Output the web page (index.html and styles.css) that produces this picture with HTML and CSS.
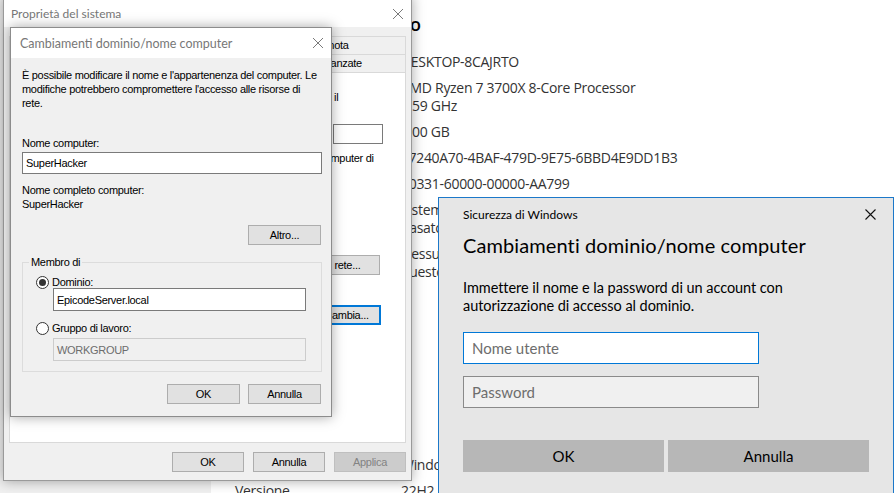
FILE: index.html
```html
<!DOCTYPE html>
<html lang="it">
<head>
<meta charset="utf-8">
<title>Cambiamenti dominio/nome computer</title>
<link rel="stylesheet" href="styles.css">
</head>
<body>
<div class="settings">
  <nav class="nav"></nav>
  <main class="main">
    <h2 class="sec-title">Specifiche dispositivo</h2>
    <dl class="specs">
      <div class="row"><dt>Nome dispositivo</dt><dd>DESKTOP-8CAJRTO</dd></div>
      <div class="row"><dt>Processore</dt><dd>AMD Ryzen 7 3700X 8-Core Processor<br>3.59 GHz</dd></div>
      <div class="row"><dt>RAM installata</dt><dd>8,00 GB</dd></div>
      <div class="row"><dt>ID dispositivo</dt><dd>E7240A70-4BAF-479D-9E75-6BBD4E9DD1B3</dd></div>
      <div class="row"><dt>ID prodotto</dt><dd>00331-60000-00000-AA799</dd></div>
      <div class="row"><dt>Tipo sistema</dt><dd>Sistema operativo a 64 bit, processore<br>basato su x64</dd></div>
      <div class="row"><dt>Penna e tocco</dt><dd>Nessun input penna o tocco disponibile per<br>questo schermo</dd></div>
    </dl>
    <div class="actions">
      <span class="s-btn">Copia</span>
      <span class="s-btn">Rinomina questo PC</span>
    </div>
    <dl class="specs specs-win">
      <div class="row"><dt>Edizione</dt><dd>Windows 10 Pro</dd></div>
      <div class="row"><dt>Versione</dt><dd>22H2</dd></div>
    </dl>
  </main>
</div>

<section class="win sys">
  <header class="tbar">
    <span class="ttl">Proprietà del sistema</span>
    <svg class="x" width="10" height="10" viewBox="0 0 10 10"><path d="M0 0L10 10M10 0L0 10" stroke="#7a7a7a" stroke-width="1"/></svg>
  </header>
  <div class="sys-body">
    <div class="tabs">
      <div class="tab-row"><span class="tab">Protezione sistema</span><span class="tab">Connessione remota</span></div>
      <div class="tab-row"><span class="tab tab-on">Nome computer</span><span class="tab">Hardware</span><span class="tab">Avanzate</span></div>
    </div>
    <div class="panel">
      <p class="p-desc">Windows usa le informazioni seguenti per identificare il<br>computer in rete.</p>
      <div class="p-field"><span>Descrizione computer:</span><span class="box p-input"></span></div>
      <p class="p-hint">Ad esempio: "Computer soggiorno" o "Computer di<br>Maria".</p>
      <p class="p-info">Nome completo computer:&nbsp;&nbsp;DESKTOP-8CAJRTO<br>Gruppo di lavoro:&nbsp;&nbsp;WORKGROUP</p>
      <div class="p-act"><p>Per usare una procedura guidata per aggiungere<br>il computer a un dominio o a un gruppo di<br>lavoro, fare clic su ID di rete.</p><span class="btn p-btn">ID di rete...</span></div>
      <div class="p-act p-act2"><p>Per rinominare il computer o modificarne il<br>dominio o il gruppo di lavoro, fare clic su<br>Cambia.</p><span class="btn p-btn btn-def">Cambia...</span></div>
    </div>
    <div class="btn-row">
      <span class="btn w72">OK</span><span class="btn w72">Annulla</span><span class="btn w72 btn-dis">Applica</span>
    </div>
  </div>
</section>

<section class="win chg">
  <header class="tbar chg-bar">
    <span class="ttl">Cambiamenti dominio/nome computer</span>
    <svg class="x" width="10" height="10" viewBox="0 0 10 10"><path d="M0 0L10 10M10 0L0 10" stroke="#7a7a7a" stroke-width="1"/></svg>
  </header>
  <div class="chg-body">
    <p class="c-desc">È possibile modificare il nome e l'appartenenza del computer. Le modifiche potrebbero compromettere l'accesso alle risorse di rete.</p>
    <div class="c-label">Nome computer:</div>
    <div class="box c-input">SuperHacker</div>
    <div class="c-full">Nome completo computer:<br>SuperHacker</div>
    <span class="btn altro">Altro...</span>
    <fieldset class="grp">
      <legend>Membro di</legend>
      <div class="radio-row"><span class="radio on"></span>Dominio:</div>
      <div class="box g-input">EpicodeServer.local</div>
      <div class="radio-row r2"><span class="radio"></span>Gruppo di lavoro:</div>
      <div class="box g-input dis">WORKGROUP</div>
    </fieldset>
    <div class="c-btns"><span class="btn w73">OK</span><span class="btn w73">Annulla</span></div>
  </div>
</section>

<section class="sec">
  <header class="sec-head">
    <span>Sicurezza di Windows</span>
    <svg class="x" width="11" height="11" viewBox="0 0 11 11"><path d="M0.5 0.5L10.5 10.5M10.5 0.5L0.5 10.5" stroke="#111" stroke-width="1.1"/></svg>
  </header>
  <h1 class="sec-title2">Cambiamenti dominio/nome computer</h1>
  <p class="sec-desc">Immettere il nome e la password di un account con<br>autorizzazione di accesso al dominio.</p>
  <div class="s-input focus">Nome utente</div>
  <div class="s-input">Password</div>
  <div class="s-btns"><span class="s-b">OK</span><span class="s-b">Annulla</span></div>
</section>
</body>
</html>
```
FILE: styles.css
```css
* { box-sizing: border-box; }
html, body { margin: 0; padding: 0; }
body {
  width: 896px; height: 493px; overflow: hidden; position: relative;
  background: #fff; font-family: Lato, "Open Sans", sans-serif;
}
p { margin: 0; }

/* ---------- Settings page (background) ---------- */
.settings { display: flex; height: 493px; }
.nav { width: 211px; flex: none; background: #f0f0f0; }
.main {
  flex: 1; padding: 10px 0 0 24px; color: #333;
  font-family: "Open Sans", sans-serif; font-size: 14px; letter-spacing: -0.3px;
}
.sec-title { margin: 0; font-size: 18px; line-height: 28px; font-weight: 600; letter-spacing: 0; color: #000; }
.specs { margin: 15px 0 0; display: flex; flex-direction: column; gap: 8px; }
.row { display: grid; grid-template-columns: 166px 1fr; line-height: 18px; }
.row dt, .row dd { margin: 0; white-space: nowrap; }
.actions { display: flex; flex-direction: column; align-items: flex-start; gap: 12px; margin-top: 40px; }
.s-btn { background: #ccc; padding: 6px 20px; line-height: 18px; }
.specs-win { margin-top: 63px; }

/* ---------- Classic windows ---------- */
.win {
  position: absolute; background: #f0f0f0; border: 1px solid #9a9a9a;
  box-shadow: 0 0 12px rgba(0,0,0,.35);
  font-family: "Liberation Sans", Arial, sans-serif; font-size: 11px; letter-spacing: -0.3px; color: #000;
  display: flex; flex-direction: column;
}
.tbar {
  background: #fff; display: flex; align-items: center; justify-content: space-between;
  flex: none; font-family: Lato, sans-serif; font-size: 12.5px; letter-spacing: 0; color: #777;
}
.sys { left: 3px; top: -4px; width: 409px; height: 485px; }
.sys .tbar { height: 30px; padding: 3px 8px 0 7px; font-size: 12px; }
.sys-body { flex: 1; padding: 9px 6px 0 5px; display: flex; flex-direction: column; }
.tabs { display: flex; flex-direction: column; }
.tab-row { display: flex; height: 18px; }
.tab {
  flex: 1; border: 1px solid #d9d9d9; border-bottom: none; margin-right: -1px;
  text-align: center; line-height: 17px; background: #f0f0f0;
}
.tab-row:first-child .tab:last-child { padding-right: 8px; }
.tab-row:last-child .tab:last-child { padding-left: 4px; }
.tab-on { background: #fff; }
.panel {
  height: 371px; background: #fff; border: 1px solid #d9d9d9; margin-right: -1px;
  padding: 17px 25px 0 18px; display: flex; flex-direction: column; line-height: 14px;
}
.p-desc { padding-left: 60px; white-space: nowrap; }
.p-field { display: flex; align-items: center; justify-content: space-between; margin-top: 6px; padding-left: 43px; }
.box { background: #fff; border: 1px solid #7a7a7a; }
.p-input { width: 50px; height: 20px; margin-right: -3px; }
.p-hint { margin-top: 7px; padding-left: 112px; white-space: nowrap; }
.p-info { margin-top: 14px; padding-left: 43px; white-space: nowrap; }
.p-act { display: flex; align-items: flex-end; justify-content: space-between; margin-top: 12px; white-space: nowrap; }
.p-act2 { margin-top: 8px; }
.btn {
  display: inline-flex; align-items: center; justify-content: center; height: 20px;
  background: #e1e1e1; border: 1px solid #adadad; line-height: 14px;
}
.p-btn { width: 89px; flex: none; }
.btn-def { border: 2px solid #0078d7; padding-left: 20px; margin-right: -1px; }
.btn-row { display: flex; justify-content: flex-end; gap: 9px; margin-top: 9px; margin-right: -1px; }
.w72 { width: 72px; }
.w73 { width: 73px; }
.btn-dis { background: #ccc; border-color: #bfbfbf; color: #838383; }

/* ---------- Change name dialog ---------- */
.chg { left: 10px; top: 27px; width: 322px; height: 390px; border-color: #8c8c8c; }
.chg-bar { height: 30px; padding: 0 8px 0 9px; }
.chg-body { flex: 1; padding: 10px 9px 0 11px; display: flex; flex-direction: column; line-height: 14px; }
.c-label { margin-top: 26px; }
.c-input { margin-top: 2px; height: 22px; padding: 3px 0 0 3px; }
.c-full { margin-top: 9px; }
.altro { align-self: flex-end; margin: 14px 1px 0 0; width: 73px; }
.grp {
  margin: 10px 0 0; padding: 0 0 10px 6px; border: 1px solid #dcdcdc; min-width: 0;
}
.grp legend { padding: 0 2px; line-height: 14px; }
.radio-row { display: flex; align-items: center; gap: 3px; height: 14px; margin: 6px 0 0 7px; }
.r2 { margin-top: 10px; }
.radio {
  width: 13px; height: 13px; border: 1px solid #333; border-radius: 50%; background: #fff;
  display: inline-flex; align-items: center; justify-content: center;
}
.radio.on::after { content: ""; width: 7px; height: 7px; border-radius: 50%; background: #333; }
.g-input { margin: -1px 0 0 24px; width: 253px; height: 23px; padding: 4px 0 0 3px; }
.r2 + .g-input { margin-top: 3px; }
.dis { background: #f0f0f0; border-color: #ccc; color: #6d6d6d; }
.c-btns { display: flex; justify-content: flex-end; gap: 8px; margin: 12px 1px 0 0; }

/* ---------- Windows Security dialog ---------- */
.sec {
  position: absolute; left: 438px; top: 197px; width: 456px; height: 310px;
  background: #e6e6e6; border: 1px solid #1c78c9; padding: 0 0 0 24px; color: #000;
  font-family: Lato, "Open Sans", sans-serif;
}
.sec-head { height: 33px; display: flex; align-items: center; justify-content: space-between; padding-right: 17px; font-size: 12px; }
.sec-title2 { margin: 0; font-size: 20px; font-weight: 400; line-height: 28px; letter-spacing: 0.1px; }
.sec-desc { margin-top: 20px; font-size: 14.5px; line-height: 18px; letter-spacing: -0.05px; }
.s-input {
  width: 296px; height: 32px; margin-top: 12px; border: 1px solid #8a8a8a; background: #f0f0f0;
  padding-left: 8px; font-size: 15px; line-height: 30px; color: #6d6d6d;
}
.s-input.focus { margin-top: 17px; background: #fff; border-color: #0078d7; }
.s-btns { display: flex; gap: 4px; margin-top: 32px; }
.s-b { width: 201px; height: 32px; background: #b7b7b7; display: flex; align-items: center; justify-content: center; font-size: 15px; }
```
